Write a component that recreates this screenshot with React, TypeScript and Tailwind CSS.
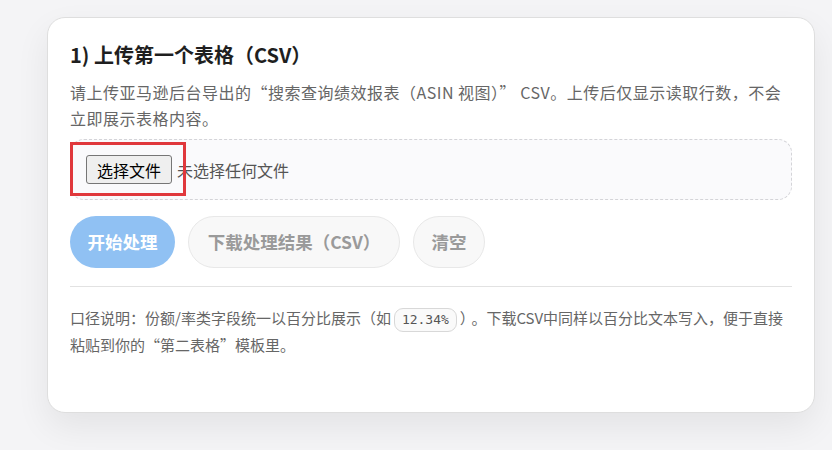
import React from "react";

const App: React.FC = () => {
  return (
    <div className="min-h-screen w-full bg-[#f4f4f6] pl-[47px] pt-[17px] font-['Noto_Sans_CJK_SC','Noto_Sans',sans-serif]">
      <div className="flex h-[396px] w-[768px] flex-col rounded-[18px] border border-[#dedede] bg-white px-[22px] pt-[23px] shadow-[0_14px_34px_rgba(0,0,0,0.07)]">
        {/* Header */}
        <h2 className="text-[20px] font-bold leading-[28px] text-[#1f1f1f]">1) 上传第一个表格（CSV）</h2>
        <p className="mt-[10px] text-[16px] leading-[26px] tracking-[0.5px] text-[#666]">
          请上传亚马逊后台导出的“搜索查询绩效报表（ASIN 视图）” CSV。上传后仅显示读取行数，不会
          <br />
          立即展示表格内容。
        </p>

        {/* File drop */}
        <div className="relative mt-[8px] flex h-[61px] items-center rounded-[14px] border border-dashed border-[#d4d4d8] bg-[#fafafc] px-[15px]">
          <span className="flex h-[29px] items-center rounded-[3px] border border-[#767676] bg-[#efefef] px-[10px] text-[16px] text-black">
            选择文件
          </span>
          <span className="ml-[5px] text-[16px] text-[#555]">未选择任何文件</span>
          <div className="absolute left-[-1px] top-[2px] h-[54px] w-[116px] border-[3px] border-[#e0383c]" />
        </div>

        {/* Actions */}
        <div className="mt-[16px] flex gap-[13px]">
          <button className="h-[52px] w-[105px] rounded-full bg-[#90c1f3] text-[17.5px] font-bold text-white">开始处理</button>
          <button className="h-[52px] w-[212px] rounded-full border border-[#e8e8e8] bg-[#f8f8f8] text-[17.5px] font-bold text-[#9a9a9a]">
            下载处理结果（CSV）
          </button>
          <button className="h-[52px] w-[72px] rounded-full border border-[#e8e8e8] bg-[#f8f8f8] text-[17.5px] font-bold text-[#9a9a9a]">清空</button>
        </div>

        <div className="mt-[18px] h-px bg-[#e2e2e2]" />

        {/* Note */}
        <p className="mt-[18px] text-[15px] leading-[25px] text-[#666]">
          口径说明：份额/率类字段统一以百分比展示（如
          <code className="mx-[3px] inline-block h-[24px] rounded-[9px] border border-[#d8d8d8] bg-[#fafafa] px-[7px] align-middle font-['DejaVu_Sans_Mono',monospace] text-[13px] leading-[22px] text-[#555]">
            12.34%
          </code>
          ）<span className="ml-[4px]">。</span>下载CSV中同样以百分比文本写入，便于直接
          <br />
          粘贴到你的“第二表格”模板里。
        </p>
      </div>
    </div>
  );
};

export default App;
